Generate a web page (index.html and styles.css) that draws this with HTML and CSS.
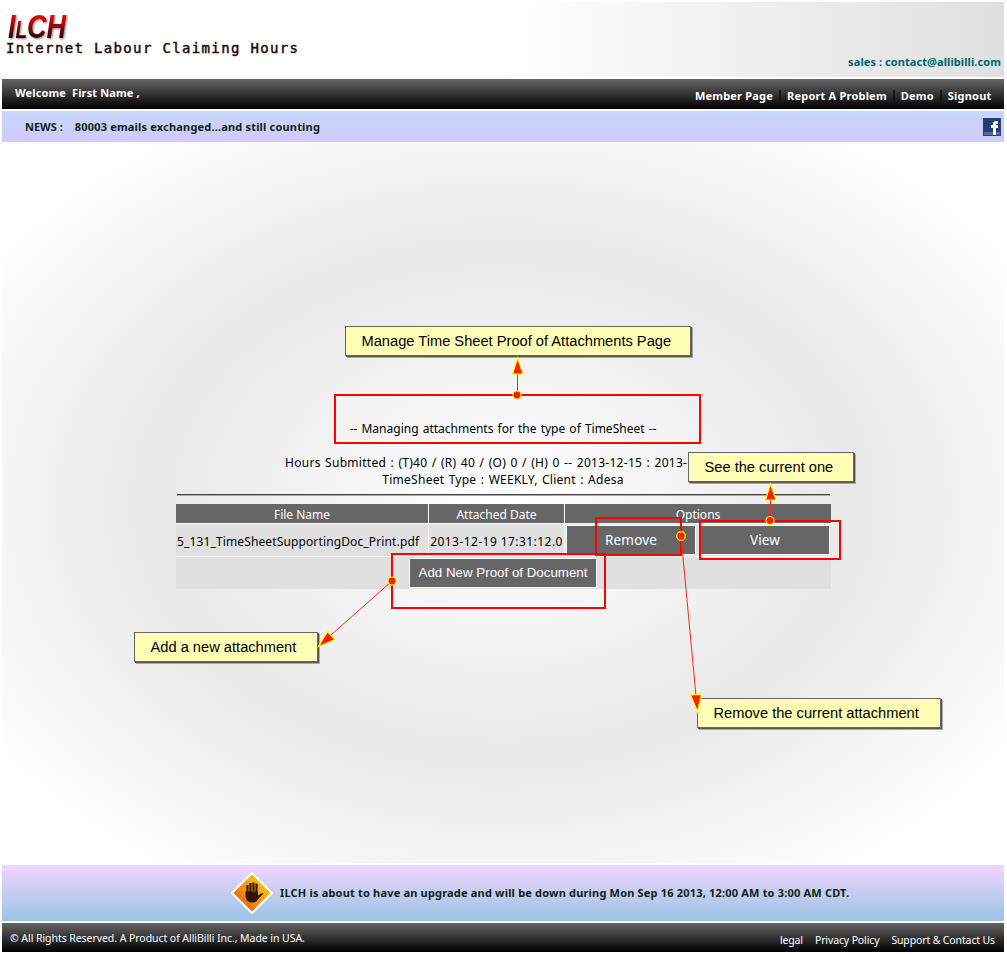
FILE: index.html
```
<!DOCTYPE html>
<html lang="en">
<head>
<meta charset="utf-8">
<title>ILCH - Internet Labour Claiming Hours</title>
<link rel="stylesheet" href="styles.css">
</head>
<body>
<div class="page">
  <header class="header">
    <div class="brand">
      <svg class="logo" width="66" height="34" viewBox="0 0 66 34" role="img" aria-label="ILCH">
        <defs><linearGradient id="ember" gradientUnits="userSpaceOnUse" x1="0" y1="6" x2="0" y2="32"><stop offset="0" stop-color="#f00"/><stop offset=".4" stop-color="#b00508"/><stop offset="1" stop-color="#1c0202"/></linearGradient></defs>
        <text class="logo-letters" fill="url(#ember)" x="2" y="31" textLength="58" lengthAdjust="spacingAndGlyphs">I<tspan class="logo-low">L</tspan>CH</text>
      </svg>
      <div class="tagline">Internet Labour Claiming Hours</div>
    </div>
    <a class="sales">sales : contact@allibilli.com</a>
  </header>
  <nav class="nav">
    <span class="welcome">Welcome &nbsp;First Name ,</span>
    <div class="menu"><a>Member Page</a><a>Report A Problem</a><a>Demo</a><a>Signout</a></div>
  </nav>
  <section class="news">
    <span class="news-label">NEWS :</span><span class="news-text">80003 emails exchanged...and still counting</span>
    <svg class="facebook" width="18" height="18" viewBox="0 0 18 18"><path fill="#263e74" d="M0 0h18v18H0z"/><path fill="#596c98" d="M1 14h16v3H1z"/><path fill="#fff" d="M10 17v-7H8V7h2V6q0-3 4-3h1v3h-1q-1 0-1 1h2v3h-2v7z"/></svg>
  </section>
  <main class="main">
    <p class="title">-- Managing attachments for the type of TimeSheet --</p>
    <p class="hours">Hours Submitted : (T)40 / (R) 40 / (O) 0 / (H) 0 -- 2013-12-15 : 2013-</p>
    <p class="kind">TimeSheet Type : WEEKLY, Client : Adesa</p>
    <div class="rule"></div>
    <div class="grid">
      <div class="th">File Name</div><div class="th">Attached Date</div><div class="th">Options</div>
      <div class="td file">5_131_TimeSheetSupportingDoc_Print.pdf</div>
      <div class="td date">2013-12-19 17:31:12.0</div>
      <div class="td options"><button class="btn">Remove</button><button class="btn">View</button></div>
      <div class="td add"><button class="btn btn-add">Add New Proof of Document</button></div>
    </div>
  </main>
  <section class="notice">
    <svg class="warning" width="44" height="44" viewBox="0 0 44 44"><defs><linearGradient id="sign" x1="0" y1="1" x2="1" y2="0"><stop offset=".2" stop-color="#e8640c"/><stop offset=".5" stop-color="#f19a10"/><stop offset=".9" stop-color="#f5d312"/></linearGradient></defs><path d="M22 2 42 22 22 42 2 22z" fill="url(#sign)" stroke="#fff" stroke-width="2" stroke-linejoin="round"/><path d="M17.500 14v7M20.500 12v9M23.500 11.500v9M26.500 12.500v9" stroke="#38190a" stroke-width="2.200"/><path d="M15.500 20.500h12.500v4l4-2.500 1.500.5-4.500 4.500-2 3-3 1.500h-4l-3-2-1.500-4z" fill="#2c1207"/></svg>
    <span class="notice-text">ILCH is about to have an upgrade and will be down during Mon Sep 16 2013, 12:00 AM to 3:00 AM CDT.</span>
  </section>
  <footer class="footer">
    <span class="copy">© All Rights Reserved. A Product of AlliBilli Inc., Made in USA.</span>
    <div class="links"><a>legal</a><a>Privacy Policy</a><a>Support &amp; Contact Us</a></div>
  </footer>
</div>

<div class="callout callout-page">Manage Time Sheet Proof of Attachments Page</div>
<div class="callout callout-view">See the current one</div>
<div class="callout callout-add">Add a new attachment</div>
<div class="callout callout-remove">Remove the current attachment</div>
<svg class="marks" width="1007" height="954" viewBox="0 0 1007 954">
  <g fill="none" stroke="#f00" stroke-width="2">
    <path d="M335 395h365v48H335zM596 518h85v37h-85zM700 521h140v38H700zM392 554h213v54H392z"/>
  </g>
  <path d="M517.500 395V373M770.500 520V499M392 581 331 635M681 536 696 696" fill="none" stroke="#fa2a0a"/>
  <g fill="#ff1c00" stroke="#ff0" stroke-width="1.200">
    <path d="M517.500 358 523 374h-10.500zM770.500 484 776 500h-10.500zM318.500 646.500 327.500 631.500 335 639.500zM697.500 711.500 690.500 695 701.500 694.500z"/>
    <circle cx="517" cy="395" r="4"/><circle cx="770" cy="520.500" r="4"/><circle cx="681" cy="536" r="4.300"/><circle cx="392" cy="581" r="4"/>
  </g>
</svg>
</body>
</html>
```
FILE: styles.css
```
body{margin:0;background:#fff;font-family:"Noto Sans",sans-serif;font-size:12px;color:#000;position:relative;width:1007px;height:954px;overflow:hidden;white-space:nowrap}
.page{width:1002px;padding:2px;display:flex;flex-direction:column;gap:2px}

.header{height:75px;display:flex;justify-content:space-between;background:linear-gradient(90deg,#fff 50%,#e0e0e0)}
.brand{padding:5px 0 0 4px}
.logo{display:block;overflow:visible}
.logo-letters{font:italic bold 33px "Liberation Sans",sans-serif;filter:drop-shadow(1px 1px 1px rgba(0,0,0,.5))}
.logo-low{font-size:23px}
.tagline{font:14px/16px "DejaVu Sans Mono",monospace;margin-top:-1px;letter-spacing:1.35px;color:#1c0808;-webkit-text-stroke:.45px #1c0808}
.sales{font-weight:bold;font-size:11px;letter-spacing:.08px;color:#066;align-self:flex-end;padding:0 3px 8px 0}

.nav{height:30px;display:flex;justify-content:space-between;background:linear-gradient(#666,#000);color:#fff;font-weight:bold;font-size:11px}
.welcome{padding:6px 13px;letter-spacing:.13px}
.menu{display:flex;padding:9px 12.5px 0 0;line-height:15px;letter-spacing:.2px}
.menu a{position:relative}
.menu a+a{margin-left:14px}
.menu a+a::before{content:"";position:absolute;left:-8px;top:2px;width:2px;height:12px;background:#151515}

.news{height:31px;display:flex;align-items:center;background:linear-gradient(#c6d6f8,#d2c9fe);font-weight:bold;font-size:11px;color:#0c1f14}
.news-label{padding-left:23px}
.news-text{padding-left:12px;letter-spacing:.18px}
.facebook{margin-left:auto;margin-right:3px}

.main{height:719px;background:radial-gradient(farthest-corner,#fff 0,#e9e9e9 50%,#fff 88%);text-align:center}
p{margin:0;line-height:17px}
.title{padding-top:276px;word-spacing:1px}
.hours{margin-top:17px;padding-left:283px;text-align:left;word-spacing:1px;letter-spacing:.28px}
.kind{word-spacing:1px;letter-spacing:.26px}
.rule{height:1px;background:#444;border-bottom:1px solid #aaa;margin:6px 174px 8px 175px}
.grid{display:grid;grid-template-columns:252px 135px 266px;width:655px;gap:1px;margin-left:174px;background:#f7f7f7}
.th{background:#666;color:#fff;height:19px;line-height:21px}
.td{background:#e0e0e0;height:32px;line-height:35px}
.file{text-align:left;padding-left:1px;letter-spacing:.13px}
.date{letter-spacing:.44px}
.options{display:flex;gap:4px;box-sizing:border-box;padding:1px}
.btn{box-sizing:border-box;width:130px;height:30px;padding:0;border:1px solid #fff;background:#666;color:#fff;font:13.5px/28px "Noto Sans",sans-serif;letter-spacing:.15px}
.btn-add{display:block;width:188px;font:13.33px/28px "Liberation Sans",sans-serif;letter-spacing:0}
.add{grid-column:1/-1;display:flex;justify-content:center;box-sizing:border-box;padding:1px 1px 0 0}

.notice{height:56px;display:flex;align-items:center;background:linear-gradient(#f3d5ff,#98c4e4);font-weight:bold;font-size:11px;color:#0c1f14}
.warning{margin:0 6px 1px 228px}
.notice-text{padding-bottom:2px;letter-spacing:.185px}
.footer{height:29px;padding:0 9px 0 8px;background:linear-gradient(#666,#000);color:#fff;font-size:10.5px;letter-spacing:-.06px;display:flex;justify-content:space-between}
.copy{line-height:30px}
.links{display:flex;gap:12px;line-height:34px;letter-spacing:-.13px}

.callout{position:absolute;box-sizing:border-box;height:30px;padding-left:15.5px;border:1px solid #666;background:#ffffb5;box-shadow:1px 1px #555,2px 2px #aaa;font:14.67px/28px "Liberation Sans",sans-serif}
.callout-page{left:345px;top:326px;width:346px}
.callout-view{left:688px;top:452px;width:166px}
.callout-add{left:134px;top:632px;width:184px}
.callout-remove{left:697px;top:698px;width:244px}
.marks{position:absolute;left:0;top:0;pointer-events:none}
```
